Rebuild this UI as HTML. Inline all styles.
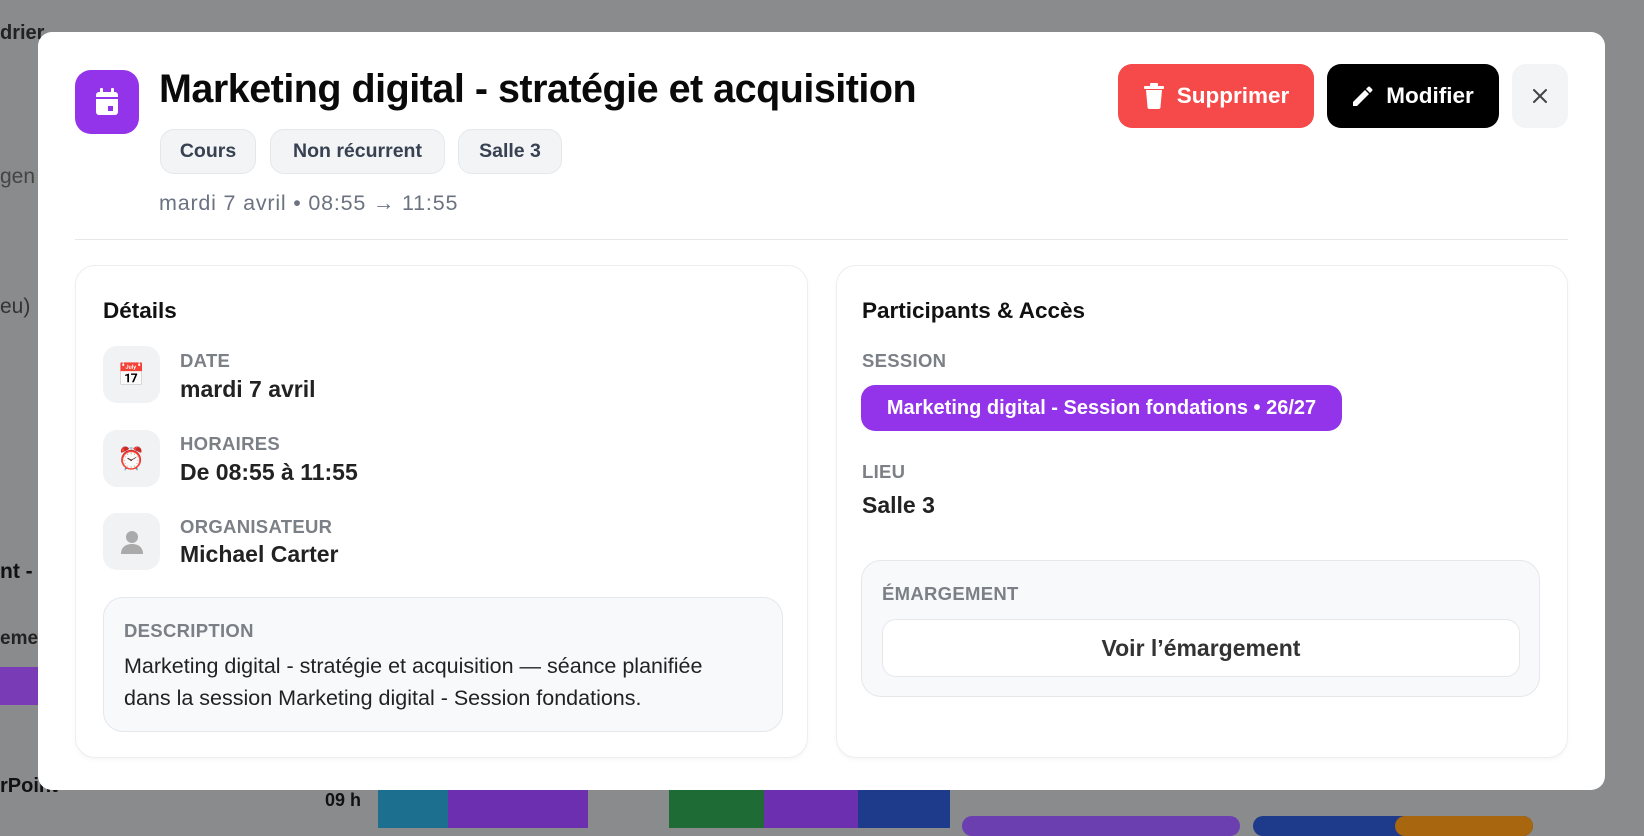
<!DOCTYPE html><html><head><meta charset="utf-8"><style>
*{box-sizing:border-box;margin:0;padding:0}
body{width:1644px;height:828px;overflow:hidden;background:#8a8b8d;font-family:"Liberation Sans",Arial,sans-serif;position:relative;color:#111}
.a{position:absolute}
.modal{left:38px;top:32px;width:1567px;height:758px;background:#fff;border-radius:14px}
.chip{top:129px;height:45px;background:#f3f4f6;border:1px solid #e5e7eb;border-radius:14px;font-weight:bold;font-size:19.5px;color:#374151;display:flex;align-items:center;justify-content:center}
.btn{top:64px;height:64px;border-radius:14px;color:#fff;font-weight:bold;font-size:22.5px;display:flex;align-items:center;justify-content:center;gap:12px}
.card{top:265px;height:493px;border:1px solid #eceef1;border-radius:20px;background:#fff;box-shadow:0 2px 4px rgba(0,0,0,.04)}
.h{font-weight:bold;font-size:22.5px;color:#111}
.lab{font-weight:bold;font-size:18.5px;color:#7b7f86;letter-spacing:.3px}
.val{font-weight:bold;font-size:23px;color:#222}
.ib{width:57px;height:57px;border-radius:14px;background:#f1f2f4;display:flex;align-items:center;justify-content:center;font-size:22px}
</style></head><body>
<div class="a" style="left:0;top:22px;font-weight:bold;font-size:20px;color:#222">drier</div>
<div class="a" style="left:0;top:165px;font-size:21px;color:#444">gen</div>
<div class="a" style="left:0;top:295px;font-size:21px;color:#333">eu)</div>
<div class="a" style="left:0;top:560px;font-weight:bold;font-size:21px;color:#111">nt - I</div>
<div class="a" style="left:0;top:628px;font-weight:bold;font-size:19px;color:#222">emer</div>
<div class="a" style="left:0;top:667px;width:38px;height:38px;background:#7a3bb6"></div>
<div class="a" style="left:0;top:775px;font-weight:bold;font-size:20px;color:#111">rPoint</div>
<div class="a" style="left:325px;top:790px;font-weight:bold;font-size:18px;color:#111">09 h</div>
<div class="a" style="left:378px;top:790px;width:70px;height:38px;background:#1c6f8f"></div>
<div class="a" style="left:448px;top:790px;width:140px;height:38px;background:#6b2fb0"></div>
<div class="a" style="left:669px;top:790px;width:95px;height:38px;background:#1f6b35"></div>
<div class="a" style="left:764px;top:790px;width:94px;height:38px;background:#6b2fb0"></div>
<div class="a" style="left:858px;top:790px;width:92px;height:38px;background:#1e3a8a"></div>
<div class="a" style="left:962px;top:816px;width:278px;height:20px;background:#6b3fb0;border-radius:10px"></div>
<div class="a" style="left:1253px;top:816px;width:280px;height:20px;background:#1e3a8a;border-radius:10px"></div>
<div class="a" style="left:1395px;top:816px;width:138px;height:20px;background:#a8660f;border-radius:10px"></div>

<div class="a modal"></div>
<div class="a" style="left:75px;top:70px;width:64px;height:64px;border-radius:16px;background:#9333ea;display:flex;align-items:center;justify-content:center">
<svg width="28" height="30" viewBox="0 0 28 30"><rect x="3" y="5" width="22" height="23" rx="3" fill="#fff"/><rect x="3" y="10" width="22" height="2" fill="#9333ea"/><rect x="7" y="1" width="3" height="6" rx="1" fill="#fff"/><rect x="18" y="1" width="3" height="6" rx="1" fill="#fff"/><rect x="15" y="19" width="5" height="5" fill="#9333ea"/></svg></div>
<div class="a" style="left:159px;top:67px;font-weight:bold;font-size:39.5px;letter-spacing:-.5px;color:#0a0a0a">Marketing digital - stratégie et acquisition</div>
<div class="a chip" style="left:160px;width:96px">Cours</div>
<div class="a chip" style="left:270px;width:175px">Non récurrent</div>
<div class="a chip" style="left:458px;width:104px">Salle 3</div>
<div class="a" style="left:159px;top:191px;font-size:21.5px;letter-spacing:.8px;color:#6b7280">mardi 7 avril • 08:55 → 11:55</div>
<div class="a" style="left:75px;top:239px;width:1493px;height:1px;background:#e5e7eb"></div>

<div class="a btn" style="left:1118px;width:196px;background:#f64a4a"><svg width="22" height="26" viewBox="0 0 22 26"><rect x="1" y="3" width="20" height="3" rx="1" fill="#fff"/><rect x="7" y="0" width="8" height="4" rx="1" fill="#fff"/><path d="M3 7h16l-1.5 17a2 2 0 0 1-2 2h-9a2 2 0 0 1-2-2z" fill="#fff"/></svg>Supprimer</div>
<div class="a btn" style="left:1327px;width:172px;background:#000"><svg width="22" height="22" viewBox="0 0 22 22"><path d="M1 17v4h4L17 9l-4-4z" fill="#fff"/><path d="M14 4l2-2a1.4 1.4 0 0 1 2 0l2 2a1.4 1.4 0 0 1 0 2l-2 2z" fill="#fff"/></svg>Modifier</div>
<div class="a" style="left:1512px;top:64px;width:56px;height:64px;border-radius:14px;background:#f3f4f6;display:flex;align-items:center;justify-content:center"><svg width="16" height="16" viewBox="0 0 16 16"><path d="M2 2l12 12M14 2L2 14" stroke="#444" stroke-width="2" stroke-linecap="round"/></svg></div>

<div class="a card" style="left:75px;width:733px"></div>
<div class="a h" style="left:103px;top:298px">Détails</div>
<div class="a ib" style="left:103px;top:346px">📅</div>
<div class="a lab" style="left:180px;top:350px">DATE</div>
<div class="a val" style="left:180px;top:376px">mardi 7 avril</div>
<div class="a ib" style="left:103px;top:430px">⏰</div>
<div class="a lab" style="left:180px;top:433px">HORAIRES</div>
<div class="a val" style="left:180px;top:459px">De 08:55 à 11:55</div>
<div class="a ib" style="left:103px;top:513px"><svg width="22" height="24" viewBox="0 0 22 24"><circle cx="11" cy="7" r="6" fill="#aaa"/><path d="M0 24c0-7 5-10 11-10s11 3 11 10z" fill="#aaa"/></svg></div>
<div class="a lab" style="left:180px;top:516px">ORGANISATEUR</div>
<div class="a val" style="left:180px;top:541px">Michael Carter</div>
<div class="a" style="left:103px;top:597px;width:680px;height:135px;background:#f8f9fb;border:1px solid #e5e7eb;border-radius:20px"></div>
<div class="a lab" style="left:124px;top:620px">DESCRIPTION</div>
<div class="a" style="left:124px;top:650px;font-size:21.5px;line-height:32px;color:#222;width:640px">Marketing digital - stratégie et acquisition — séance planifiée<br>dans la session Marketing digital - Session fondations.</div>

<div class="a card" style="left:836px;width:732px"></div>
<div class="a h" style="left:862px;top:298px">Participants &amp; Accès</div>
<div class="a lab" style="left:862px;top:350px">SESSION</div>
<div class="a" style="left:861px;top:385px;width:481px;height:46px;border-radius:14px;background:#9333ea;color:#fff;font-weight:bold;font-size:20px;display:flex;align-items:center;justify-content:center">Marketing digital - Session fondations • 26/27</div>
<div class="a lab" style="left:862px;top:461px">LIEU</div>
<div class="a val" style="left:862px;top:492px">Salle 3</div>
<div class="a" style="left:861px;top:560px;width:679px;height:137px;background:#f8f9fb;border:1px solid #e5e7eb;border-radius:20px"></div>
<div class="a lab" style="left:882px;top:583px">ÉMARGEMENT</div>
<div class="a" style="left:882px;top:619px;width:638px;height:58px;background:#fff;border:1px solid #e5e7eb;border-radius:14px;font-weight:bold;font-size:23px;color:#333;display:flex;align-items:center;justify-content:center">Voir l’émargement</div>
</body></html>
